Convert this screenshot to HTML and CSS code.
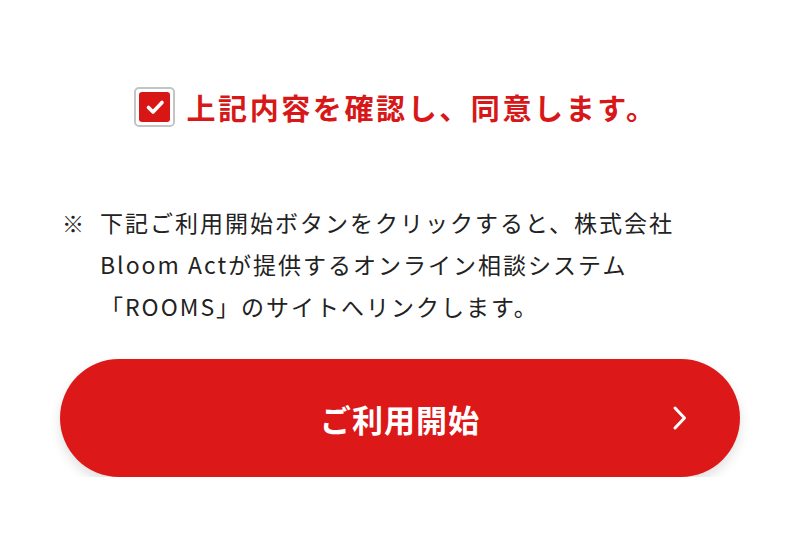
FILE: index.html
```html
<!DOCTYPE html>
<html lang="ja">
<head>
<meta charset="utf-8">
<link rel="stylesheet" href="styles.css">
</head>
<body>
<main class="page">
  <label class="agree">
    <span class="agree__box">
      <span class="agree__check">
        <svg viewBox="0 0 30 30" width="30" height="30"><path d="M8.5 15.5 L13 20 L22 10.5" fill="none" stroke="#fff" stroke-width="3.6" stroke-linecap="round" stroke-linejoin="round"/></svg>
      </span>
    </span>
    <span class="agree__text">上記内容を確認し、同意します。</span>
  </label>
  <div class="note">
    <span class="note__mark">※</span>
    <p class="note__text">下記ご利用開始ボタンをクリックすると、株式会社<br>Bloom Actが提供するオンライン相談システム<br>「ROOMS」のサイトへリンクします。</p>
  </div>
  <a class="start" href="#">
    <span class="start__label">ご利用開始</span>
    <svg class="start__arrow" viewBox="0 0 16 26" width="16" height="26"><path d="M3 3 L12.5 13 L3 23" fill="none" stroke="#fff" stroke-width="3" stroke-linecap="round" stroke-linejoin="round"/></svg>
  </a>
</main>
</body>
</html>
```
FILE: styles.css
```css
html, body {
  margin: 0;
  padding: 0;
  background: #fff;
}
body {
  font-family: "Noto Sans CJK JP", "Noto Sans", sans-serif;
  color: #222;
}
.page {
  width: 680px;
  margin: 0 auto;
  padding-top: 87px;
  display: flex;
  flex-direction: column;
}
.agree {
  display: flex;
  align-items: center;
  justify-content: center;
  gap: 11px;
  height: 40px;
  padding-right: 8px;
}
.agree__box {
  width: 41px;
  height: 40px;
  box-sizing: border-box;
  border: 2px solid #c4c4c4;
  border-radius: 5px;
  display: flex;
  align-items: center;
  justify-content: center;
  background: #fff;
}
.agree__check {
  width: 31px;
  height: 30px;
  background: #d91616;
  border-radius: 3px;
  display: flex;
  align-items: center;
  justify-content: center;
}
.agree__text {
  font-size: 29px;
  font-weight: 700;
  color: #d81818;
  letter-spacing: 2.6px;
  line-height: 40px;
}
.note {
  margin-top: 74px;
  display: flex;
  align-items: flex-start;
  padding-left: 2px;
}
.note__mark {
  width: 38px;
  flex: none;
  font-size: 22px;
  line-height: 42px;
}
.note__text {
  margin: 0;
  font-size: 23px;
  line-height: 42px;
  letter-spacing: 2px;
}
.start {
  margin-top: 32px;
  height: 118px;
  border-radius: 59px;
  background: #dc1818;
  box-shadow: 0 6px 12px rgba(0, 0, 0, 0.12);
  display: flex;
  align-items: center;
  justify-content: center;
  position: relative;
  text-decoration: none;
}
.start__label {
  color: #fff;
  font-size: 31px;
  font-weight: 700;
  letter-spacing: 1px;
}
.start__arrow {
  position: absolute;
  right: 52px;
  top: 50%;
  margin-top: -13px;
}
```
